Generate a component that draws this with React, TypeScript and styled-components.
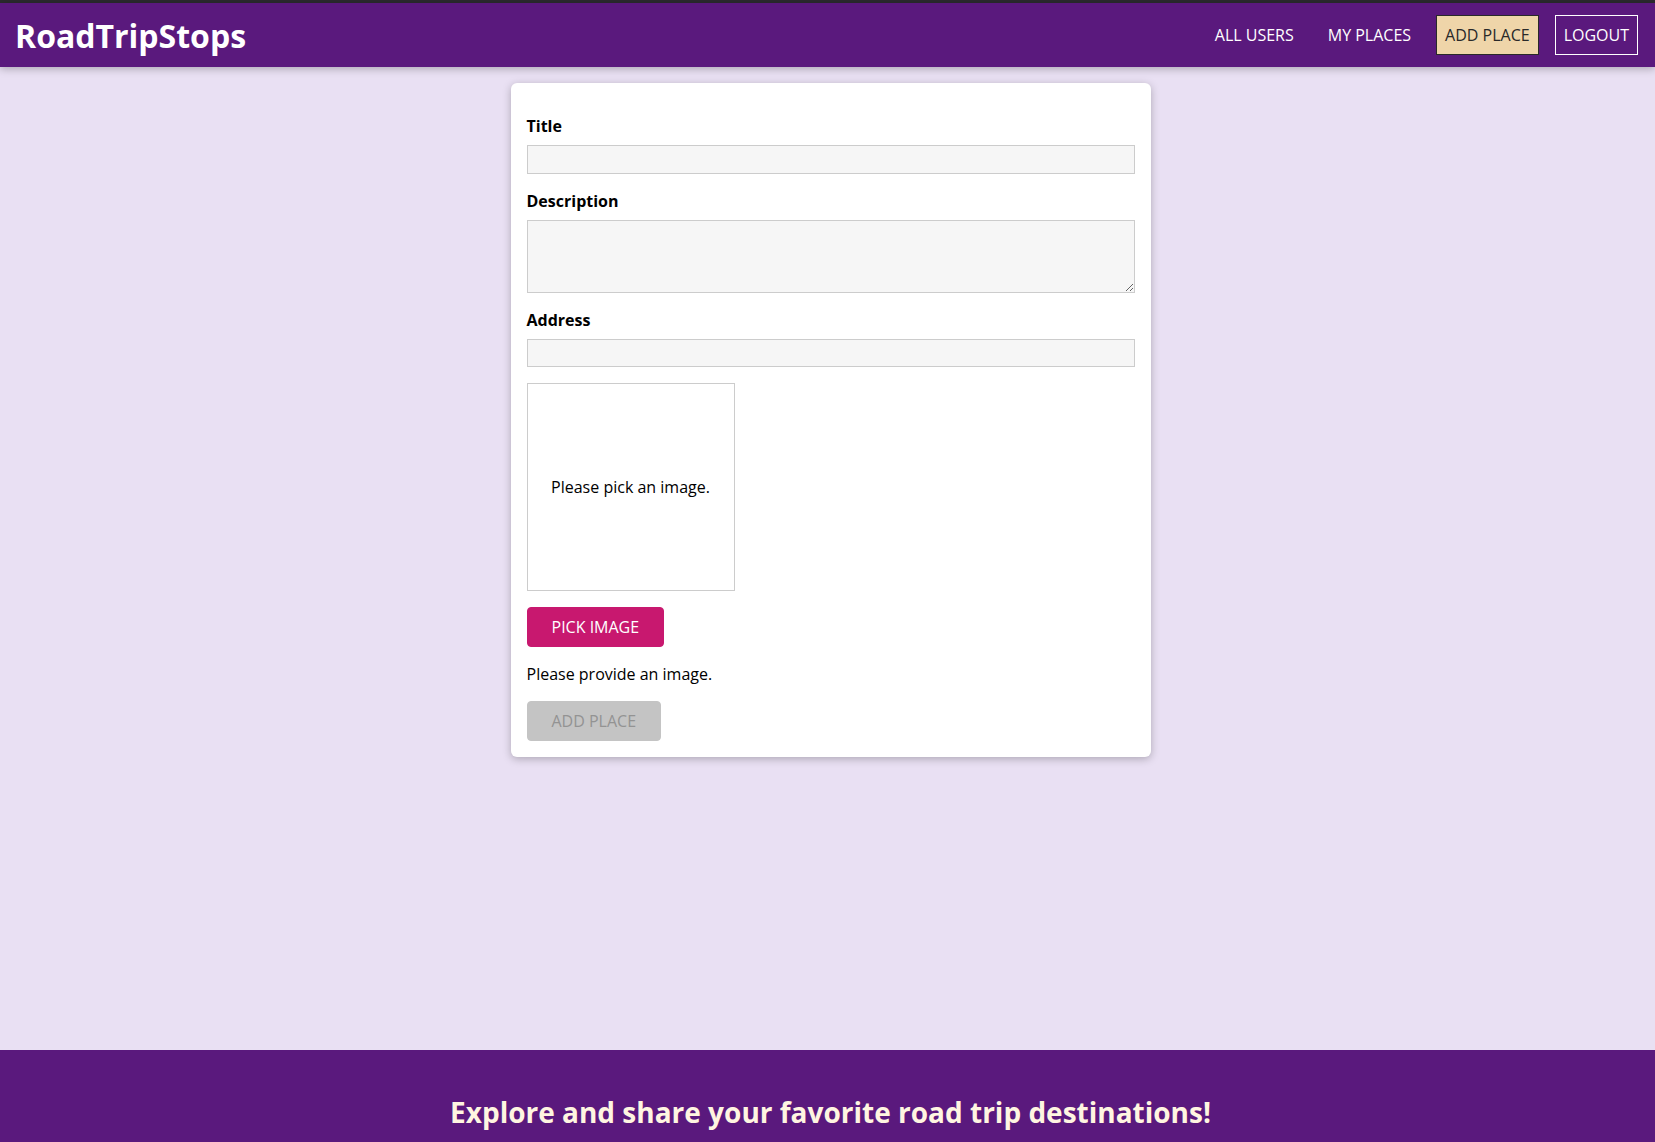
import React from "react";
import styled, { createGlobalStyle } from "styled-components";

const GlobalStyle = createGlobalStyle`
	* {
		box-sizing: border-box;
	}
	html, body {
		margin: 0;
		padding: 0;
	}
	body {
		font-family: "Open Sans", "Noto Sans", sans-serif;
		background: #e9e0f3;
	}
`;

export default function App() {
	return (
		<>
			<GlobalStyle />
			<Page>
				<TopStrip />
				<MainHeader>
					<Logo>RoadTripStops</Logo>
					<NavLinks>
						<NavLink>ALL USERS</NavLink>
						<NavLink>MY PLACES</NavLink>
						<NavLink active>ADD PLACE</NavLink>
						<NavButton>LOGOUT</NavButton>
					</NavLinks>
				</MainHeader>
				<Main>
					<PlaceForm>
						<FormControl>
							<Label htmlFor="title">Title</Label>
							<Input id="title" type="text" />
						</FormControl>
						<FormControl>
							<Label htmlFor="description">Description</Label>
							<TextArea id="description" rows={3} />
						</FormControl>
						<FormControl>
							<Label htmlFor="address">Address</Label>
							<Input id="address" type="text" />
						</FormControl>
						<ImageUpload>
							<Preview>
								<p>Please pick an image.</p>
							</Preview>
							<Button type="button">PICK IMAGE</Button>
						</ImageUpload>
						<Hint>Please provide an image.</Hint>
						<Button type="submit" disabled inactive>
							ADD PLACE
						</Button>
					</PlaceForm>
				</Main>
				<Footer>
					<FooterText>Explore and share your favorite road trip destinations!</FooterText>
				</Footer>
			</Page>
		</>
	);
}

const Page = styled.div({
	minHeight: "100vh",
	display: "flex",
	flexDirection: "column"
});

const TopStrip = styled.div({
	height: "3px",
	background: "#2b2a2e"
});

const MainHeader = styled.header({
	height: "64px",
	display: "flex",
	alignItems: "center",
	justifyContent: "space-between",
	padding: "0 17px 0 15px",
	background: "#5a197d",
	boxShadow: "0 2px 8px rgba(0, 0, 0, 0.26)",
	position: "relative",
	zIndex: 1
});

const Logo = styled.h1({
	margin: 0,
	color: "white",
	fontSize: "32px",
	fontWeight: 700
});

const NavLinks = styled.ul({
	listStyle: "none",
	margin: 0,
	padding: 0,
	display: "flex",
	alignItems: "center",
	gap: "16px"
});

const NavLink = styled.li<{ active?: boolean }>(({ active }) => ({
	fontSize: "16px",
	padding: "8px",
	border: active ? "1px solid #292929" : "1px solid transparent",
	background: active ? "#efd5a9" : "transparent",
	color: active ? "#292929" : "white",
	cursor: "pointer"
}));

const NavButton = styled.button({
	font: "inherit",
	fontSize: "16px",
	padding: "8px",
	border: "1px solid white",
	background: "transparent",
	color: "white",
	cursor: "pointer"
});

const Main = styled.main({
	flex: 1,
	padding: "16px 0 0 6px"
});

const PlaceForm = styled.form({
	width: "90%",
	maxWidth: "640px",
	margin: "0 auto",
	padding: "16px",
	background: "white",
	borderRadius: "6px",
	boxShadow: "0 2px 8px rgba(0, 0, 0, 0.26)"
});

const FormControl = styled.div({
	margin: "16px 0"
});

const Label = styled.label({
	display: "block",
	fontWeight: 700,
	fontSize: "16px",
	marginBottom: "8px",
	color: "black"
});

const Input = styled.input({
	display: "block",
	width: "100%",
	font: "inherit",
	height: "28.5px",
	border: "1px solid #ccc",
	background: "#f6f6f6",
	padding: "2px 4px"
});

const TextArea = styled.textarea({
	display: "block",
	width: "100%",
	font: "inherit",
	height: "73px",
	border: "1px solid #ccc",
	background: "#f6f6f6",
	padding: "2px 4px"
});

const ImageUpload = styled.div({
	margin: "16px 0"
});

const Preview = styled.div({
	width: "208px",
	height: "208px",
	border: "1px solid #ccc",
	display: "flex",
	justifyContent: "center",
	alignItems: "center",
	textAlign: "center",
	marginBottom: "16px",
	fontSize: "16px",
	p: {
		margin: 0
	}
});

const Button = styled.button<{ inactive?: boolean }>(({ inactive }) => ({
	font: "inherit",
	fontSize: "16px",
	padding: "8px 24px",
	border: inactive ? "1px solid #c4c4c4" : "1px solid #c8186f",
	borderRadius: "4px",
	background: inactive ? "#c4c4c4" : "#c8186f",
	color: inactive ? "#939393" : "white",
	cursor: inactive ? "not-allowed" : "pointer"
}));

const Hint = styled.p({
	margin: "0 0 16px",
	fontSize: "16px"
});

const Footer = styled.footer({
	background: "#5a197d",
	padding: "43px 16px 11px 22px",
	textAlign: "center"
});

const FooterText = styled.h2({
	margin: 0,
	fontSize: "28px",
	lineHeight: "38px",
	fontWeight: 700,
	color: "#fff5e1"
});
